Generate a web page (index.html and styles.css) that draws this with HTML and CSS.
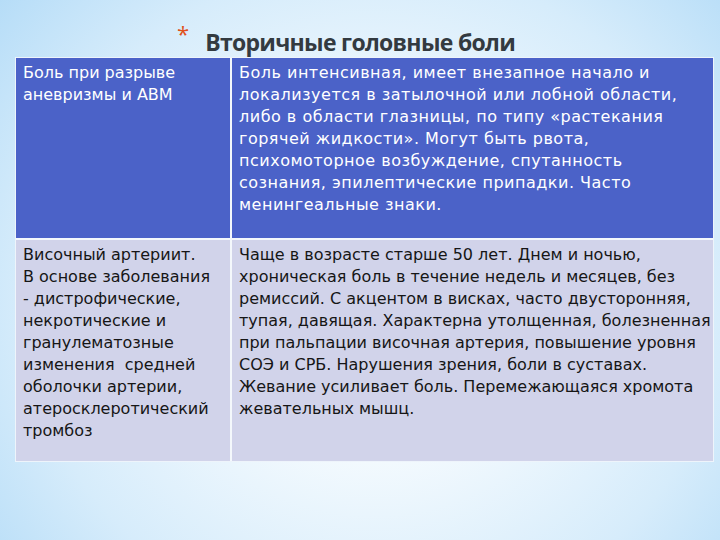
FILE: index.html
```html
<!DOCTYPE html>
<html lang="ru">
<head>
<meta charset="utf-8">
<link rel="stylesheet" href="styles.css">
</head>
<body>
<div class="slide">
  <h1 class="title"><span class="star">*</span><span class="title-text">Вторичные головные боли</span></h1>
  <div class="table">
    <div class="cell c1 dark">Боль при разрыве<br>аневризмы и АВМ</div>
    <div class="cell c2 dark">Боль интенсивная, имеет внезапное начало и<br>локализуется в затылочной или лобной области,<br>либо в области глазницы, по типу «растекания<br>горячей жидкости». Могут быть рвота,<br>психомоторное возбуждение, спутанность<br>сознания, эпилептические припадки. Часто<br>менингеальные знаки.</div>
    <div class="cell c1 light">Височный артериит.<br>В основе заболевания<br>- дистрофические,<br>некротические и<br>гранулематозные<br>изменения&nbsp; средней<br>оболочки артерии,<br>атеросклеротический<br>тромбоз</div>
    <div class="cell c2 light">Чаще в возрасте старше 50 лет. Днем и ночью,<br>хроническая боль в течение недель и месяцев, без<br>ремиссий. С акцентом в висках, часто двусторонняя,<br>тупая, давящая. Характерна утолщенная, болезненная<br>при пальпации височная артерия, повышение уровня<br>СОЭ и СРБ. Нарушения зрения, боли в суставах.<br>Жевание усиливает боль. Перемежающаяся хромота<br>жевательных мышц.</div>
  </div>
</div>
</body>
</html>
```
FILE: styles.css
```css
html, body {
  margin: 0;
  padding: 0;
}
body {
  width: 720px;
  height: 540px;
  overflow: hidden;
  font-family: "DejaVu Sans", "Open Sans", sans-serif;
}
.slide {
  width: 720px;
  height: 540px;
  box-sizing: border-box;
  padding: 22px 9px 0 15px;
  background: radial-gradient(ellipse 75% 95% at 52% 55%, #ffffff 0%, #f4fafe 30%, #d6ecfb 65%, #aad7f6 100%);
}
.title {
  margin: 0;
  height: 35px;
  display: flex;
  align-items: flex-start;
  padding-left: 162px;
  font-weight: bold;
  color: #333a40;
  font-family: "Open Sans", sans-serif;
}
.star {
  color: #e0501a;
  font-size: 22px;
  line-height: 22px;
  font-weight: normal;
  margin-right: 16px;
}
.title-text {
  font-size: 23px;
  line-height: 34px;
  margin-top: 3px;
  letter-spacing: -0.7px;
}
.table {
  display: grid;
  grid-template-columns: 214px 1fr;
  grid-template-rows: 180px 221px;
  gap: 2px;
  width: 697px;
  background: #f4f8fc;
  border: 1px solid #eef4fb;
}
.cell {
  padding: 4px 2px 0 7px;
  font-size: 16px;
  line-height: 22px;
  white-space: nowrap;
}
.c2.dark {
  letter-spacing: 0.5px;
}
.dark {
  background: #4b62c8;
  color: #ffffff;
}
.light {
  background: #d1d3ea;
  color: #161616;
}
```
